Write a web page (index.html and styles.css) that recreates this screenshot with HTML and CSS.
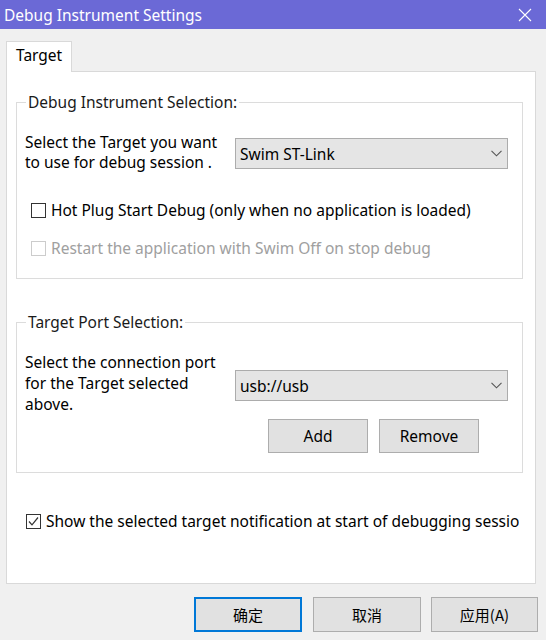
FILE: index.html
```html
<!DOCTYPE html>
<html>
<head>
<meta charset="utf-8">
<link rel="stylesheet" href="styles.css">
</head>
<body>
<div class="window">
  <div class="titlebar">
    <span class="title">Debug Instrument Settings</span>
    <svg class="close" width="14" height="14" viewBox="0 0 14 14"><path d="M1 1 L13 13 M13 1 L1 13" stroke="#fff" stroke-width="1.1" fill="none"/></svg>
  </div>
  <div class="tabs"><div class="tab">Target</div></div>
  <div class="panel">
    <div class="group g1">
      <div class="group-title">Debug Instrument Selection:</div>
      <div class="row">
        <div class="label l1">Select the Target you want<br>to use for debug session .</div>
        <div class="right">
          <div class="select">Swim ST-Link<svg class="chev" width="11" height="7" viewBox="0 0 11 7"><path d="M0.5 0.8 L5.5 5.8 L10.5 0.8" stroke="#555" stroke-width="1.1" fill="none"/></svg></div>
        </div>
      </div>
      <div class="check c1"><span class="box"></span><span>Hot Plug Start Debug (only when no application is loaded)</span></div>
      <div class="check c2 disabled"><span class="box"></span><span>Restart the application with Swim Off on stop debug</span></div>
    </div>
    <div class="group g2">
      <div class="group-title">Target Port Selection:</div>
      <div class="row">
        <div class="label l2">Select the connection port<br>for the Target selected<br>above.</div>
        <div class="right">
          <div class="select s2">usb://usb<svg class="chev" width="11" height="7" viewBox="0 0 11 7"><path d="M0.5 0.8 L5.5 5.8 L10.5 0.8" stroke="#555" stroke-width="1.1" fill="none"/></svg></div>
          <div class="btnrow">
            <div class="btn small">Add</div>
            <div class="btn small">Remove</div>
          </div>
        </div>
      </div>
    </div>
    <div class="check notify"><span class="box checked"><svg width="13" height="13" viewBox="0 0 13 13"><path d="M2 6.5 L5 9.8 L11 2.5" stroke="#333" stroke-width="1.2" fill="none"/></svg></span><span class="clip">Show the selected target notification at start of debugging session</span></div>
  </div>
  <div class="footer">
    <div class="btn big default">确定</div>
    <div class="btn big">取消</div>
    <div class="btn big last">应用(A)</div>
  </div>
</div>
</body>
</html>
```
FILE: styles.css
```css
html, body {
  margin: 0;
  padding: 0;
  background: #f0f0f0;
}
body {
  font-family: "Noto Sans", "Noto Sans CJK SC", sans-serif;
  font-size: 15.5px;
  color: #000;
}
.window {
  width: 546px;
  height: 640px;
  overflow: hidden;
  background: #f0f0f0;
}
.titlebar {
  height: 29px;
  background: #6b69d6;
  display: flex;
  align-items: center;
  justify-content: space-between;
  padding: 0 14px 0 4px;
  color: #fff;
}
.title {
  font-size: 15.5px;
  line-height: 28px;
}
.close {
  display: block;
}
.tabs {
  padding: 12px 0 0 6px;
  display: flex;
}
.tab {
  width: 66px;
  height: 31px;
  box-sizing: border-box;
  border: 1px solid #d9d9d9;
  border-bottom: none;
  background: #fff;
  line-height: 27px;
  padding-left: 9px;
  margin-bottom: -1px;
  position: relative;
  z-index: 1;
}
.panel {
  margin-left: 6px;
  width: 530px;
  height: 513px;
  box-sizing: border-box;
  border: 1px solid #d9d9d9;
  background: #fff;
  padding-top: 30px;
}
.group {
  margin: 0 12px 0 9px;
  border: 1px solid #dcdcdc;
  box-sizing: border-box;
}
.group-title {
  width: fit-content;
  margin: -11px 0 0 9px;
  padding: 0 2px;
  background: #fff;
  line-height: 20px;
  color: #1a1a1a;
}
.row {
  display: flex;
  padding-left: 8px;
  padding-right: 14px;
}
.label {
  width: 210px;
  flex: none;
  white-space: nowrap;
}
.l1 {
  line-height: 20px;
}
.l2 {
  line-height: 21px;
}
.right {
  flex: 1;
}
.select {
  height: 31px;
  box-sizing: border-box;
  border: 1px solid #acacac;
  background: #e5e5e5;
  display: flex;
  align-items: center;
  justify-content: space-between;
  padding: 0 5px 0 4px;
}
.g1 {
  height: 177px;
}
.g1 .row {
  margin-top: 20px;
}
.g1 .select {
  margin-top: 6px;
}
.check {
  display: flex;
  align-items: center;
  line-height: 20px;
  white-space: nowrap;
}
.box {
  width: 15px;
  height: 15px;
  box-sizing: border-box;
  border: 1px solid #333;
  background: #fff;
  margin-right: 5px;
  flex: none;
  display: flex;
  align-items: center;
  justify-content: center;
}
.c1 {
  margin: 28px 0 0 14px;
}
.c2 {
  margin: 18px 0 0 14px;
}
.disabled {
  color: #a0a0a0;
}
.disabled .box {
  border-color: #cccccc;
}
.g2 {
  margin-top: 43px;
  height: 151px;
}
.g2 .row {
  margin-top: 20px;
}
.s2 {
  margin-top: 18px;
}
.btnrow {
  display: flex;
  gap: 11px;
  margin-top: 18px;
  padding-left: 33px;
}
.btn {
  box-sizing: border-box;
  border: 1px solid #adadad;
  background: #e1e1e1;
  display: flex;
  align-items: center;
  justify-content: center;
}
.small {
  width: 100px;
  height: 34px;
}
.notify {
  margin: 38px 0 0 19px;
  width: 493px;
  overflow: hidden;
}
.clip {
  overflow: hidden;
}
.footer {
  display: flex;
  justify-content: flex-end;
  gap: 11px;
  padding: 13px 8px 0 0;
}
.big {
  width: 108px;
  height: 35px;
  font-family: "Noto Sans CJK SC", sans-serif;
  font-size: 15px;
}
.last {
  width: 107px;
  margin-left: -1px;
}
.default {
  border: 2px solid #0078d7;
}
```
